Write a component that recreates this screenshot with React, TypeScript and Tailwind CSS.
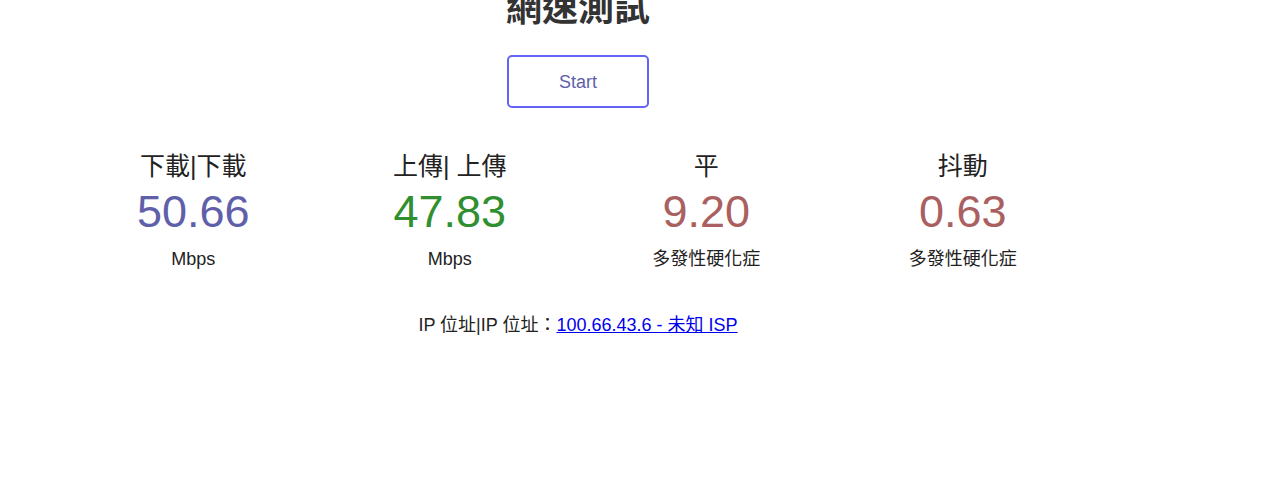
import React from "react";

const font = { fontFamily: '"Liberation Sans", Arial, "Noto Sans CJK TC", sans-serif' };

function Meter({ name, value, unit, color }: { name: string; value: string; unit: string; color: string }) {
  return (
    <div className="flex flex-col items-center">
      <div className="text-[25px] leading-[30px] text-[#222222]">{name}</div>
      <div className={`mt-[8px] text-[45px] leading-[45px] ${color}`}>{value}</div>
      <div className="mt-[16px] text-[18px] leading-[18px] text-[#222222]">{unit}</div>
    </div>
  );
}

export default function App() {
  return (
    <div className="w-[1280px] h-[501px] bg-white overflow-hidden" style={font}>
      <div className="w-[1156px] flex flex-col items-center">
        <h1 className="mt-[-9px] text-[36px] leading-[36px] font-bold text-[#333333]">網速測試</h1>
        <button className="mt-[28px] w-[142px] h-[53px] pt-[1px] border-[2.5px] border-[#6363f5] rounded-[5px] text-[18px] text-[#6060aa] bg-transparent">
          Start
        </button>
        <div className="mt-[43px] grid grid-cols-4 w-[1026px]">
          <Meter name="下載|下載" value="50.66" unit="Mbps" color="text-[#6060aa]" />
          <Meter name="上傳| 上傳" value="47.83" unit="Mbps" color="text-[#309030]" />
          <Meter name="平" value="9.20" unit="多發性硬化症" color="text-[#aa6060]" />
          <Meter name="抖動" value="0.63" unit="多發性硬化症" color="text-[#aa6060]" />
        </div>
        <div className="mt-[47px] text-[18px] leading-[20px] text-[#222222]">
          IP 位址|IP 位址：<a href="#" className="text-[#0000ee] underline">100.66.43.6 - 未知 ISP</a>
        </div>
      </div>
    </div>
  );
}
